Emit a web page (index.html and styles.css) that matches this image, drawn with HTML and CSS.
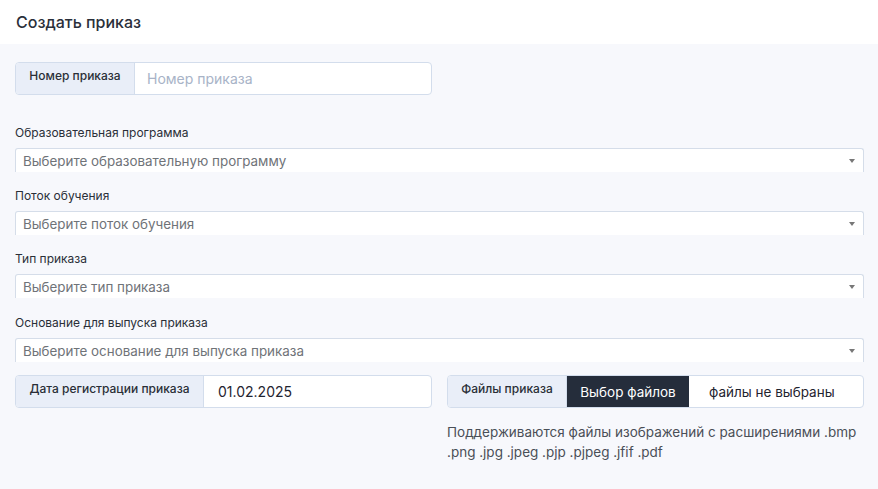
FILE: index.html
```html
<!DOCTYPE html>
<html lang="ru">
<head>
<meta charset="utf-8">
<link rel="stylesheet" href="styles.css">
</head>
<body>
<div class="header">Создать приказ</div>
<div class="content">
  <div class="row">
    <div class="group">
      <div class="group-label">Номер приказа</div>
      <div class="group-input placeholder">Номер приказа</div>
    </div>
    <div></div>
  </div>

  <div class="field first">
    <div class="field-label">Образовательная программа</div>
    <div class="select"><span>Выберите образовательную программу</span><span class="arrow"></span></div>
  </div>
  <div class="field">
    <div class="field-label">Поток обучения</div>
    <div class="select"><span>Выберите поток обучения</span><span class="arrow"></span></div>
  </div>
  <div class="field">
    <div class="field-label">Тип приказа</div>
    <div class="select"><span>Выберите тип приказа</span><span class="arrow"></span></div>
  </div>
  <div class="field last">
    <div class="field-label">Основание для выпуска приказа</div>
    <div class="select"><span>Выберите основание для выпуска приказа</span><span class="arrow"></span></div>
  </div>

  <div class="row bottom">
    <div class="group">
      <div class="group-label wide">Дата регистрации приказа</div>
      <div class="group-input value">01.02.2025</div>
    </div>
    <div class="col">
      <div class="group">
        <div class="group-label">Файлы приказа</div>
        <div class="file-btn">Выбор файлов</div>
        <div class="file-name">файлы не выбраны</div>
      </div>
      <p class="hint">Поддерживаются файлы изображений с расширениями .bmp .png .jpg .jpeg .pjp .pjpeg .jfif .pdf</p>
    </div>
  </div>
</div>
</body>
</html>
```
FILE: styles.css
```css
html, body {
  margin: 0;
  padding: 0;
  height: 100%;
}
body {
  font-family: Inter, "Noto Sans", sans-serif;
  background: #f7f8fc;
  color: #212529;
}
.header {
  background: #ffffff;
  height: 44px;
  display: flex;
  align-items: center;
  padding-left: 16px;
  font-size: 16px;
  font-weight: 500;
  color: #2a2f3a;
}
.content {
  padding: 18px 14px 0 15px;
}
.row {
  display: grid;
  grid-template-columns: 1fr 1fr;
  column-gap: 15px;
}
.group {
  display: flex;
  height: 33px;
  border: 1px solid #d3ddec;
  border-radius: 4px;
  background: #ffffff;
  overflow: hidden;
  box-sizing: border-box;
}
.group-label {
  width: 119px;
  flex: none;
  background: #e9eef8;
  border-right: 1px solid #d3ddec;
  font-size: 12px;
  font-weight: 500;
  color: #2a2e37;
  text-align: center;
  padding-top: 5px;
  box-sizing: border-box;
}
.group-label.wide {
  width: 188px;
}
.group-input {
  flex: 1;
  display: flex;
  align-items: center;
  font-size: 14px;
}
.group-input.placeholder {
  padding-left: 12px;
  color: #a8b3c7;
}
.group-input.value {
  padding-left: 14px;
  color: #1f2430;
}
.field.first {
  margin-top: 30px;
}
.field {
  margin-top: 16px;
}
.field.last {
  margin-top: 17px;
}
.field-label {
  font-size: 12px;
  color: #2a2f38;
  line-height: 16px;
  margin-bottom: 7px;
}
.select {
  height: 24px;
  background: #ffffff;
  border: 1px solid #d5dde9;
  border-bottom: none;
  border-radius: 3px 3px 0 0;
  box-sizing: border-box;
  display: flex;
  align-items: center;
  justify-content: space-between;
  padding: 0 8px 0 7px;
  font-size: 13.4px;
  color: #6f7378;
}
.arrow {
  width: 0;
  height: 0;
  border-left: 3.5px solid transparent;
  border-right: 3.5px solid transparent;
  border-top: 4px solid #777;
}
.row.bottom {
  margin-top: 13px;
}
.file-btn {
  width: 122px;
  flex: none;
  background: #252d3b;
  color: #ffffff;
  font-size: 13.5px;
  display: flex;
  align-items: center;
  justify-content: center;
}
.file-name {
  flex: 1;
  display: flex;
  align-items: center;
  padding-left: 20px;
  font-size: 13.5px;
  color: #1f2430;
}
.hint {
  margin: 14px 0 0;
  font-size: 13.5px;
  line-height: 20px;
  color: #4a4f57;
}
```
